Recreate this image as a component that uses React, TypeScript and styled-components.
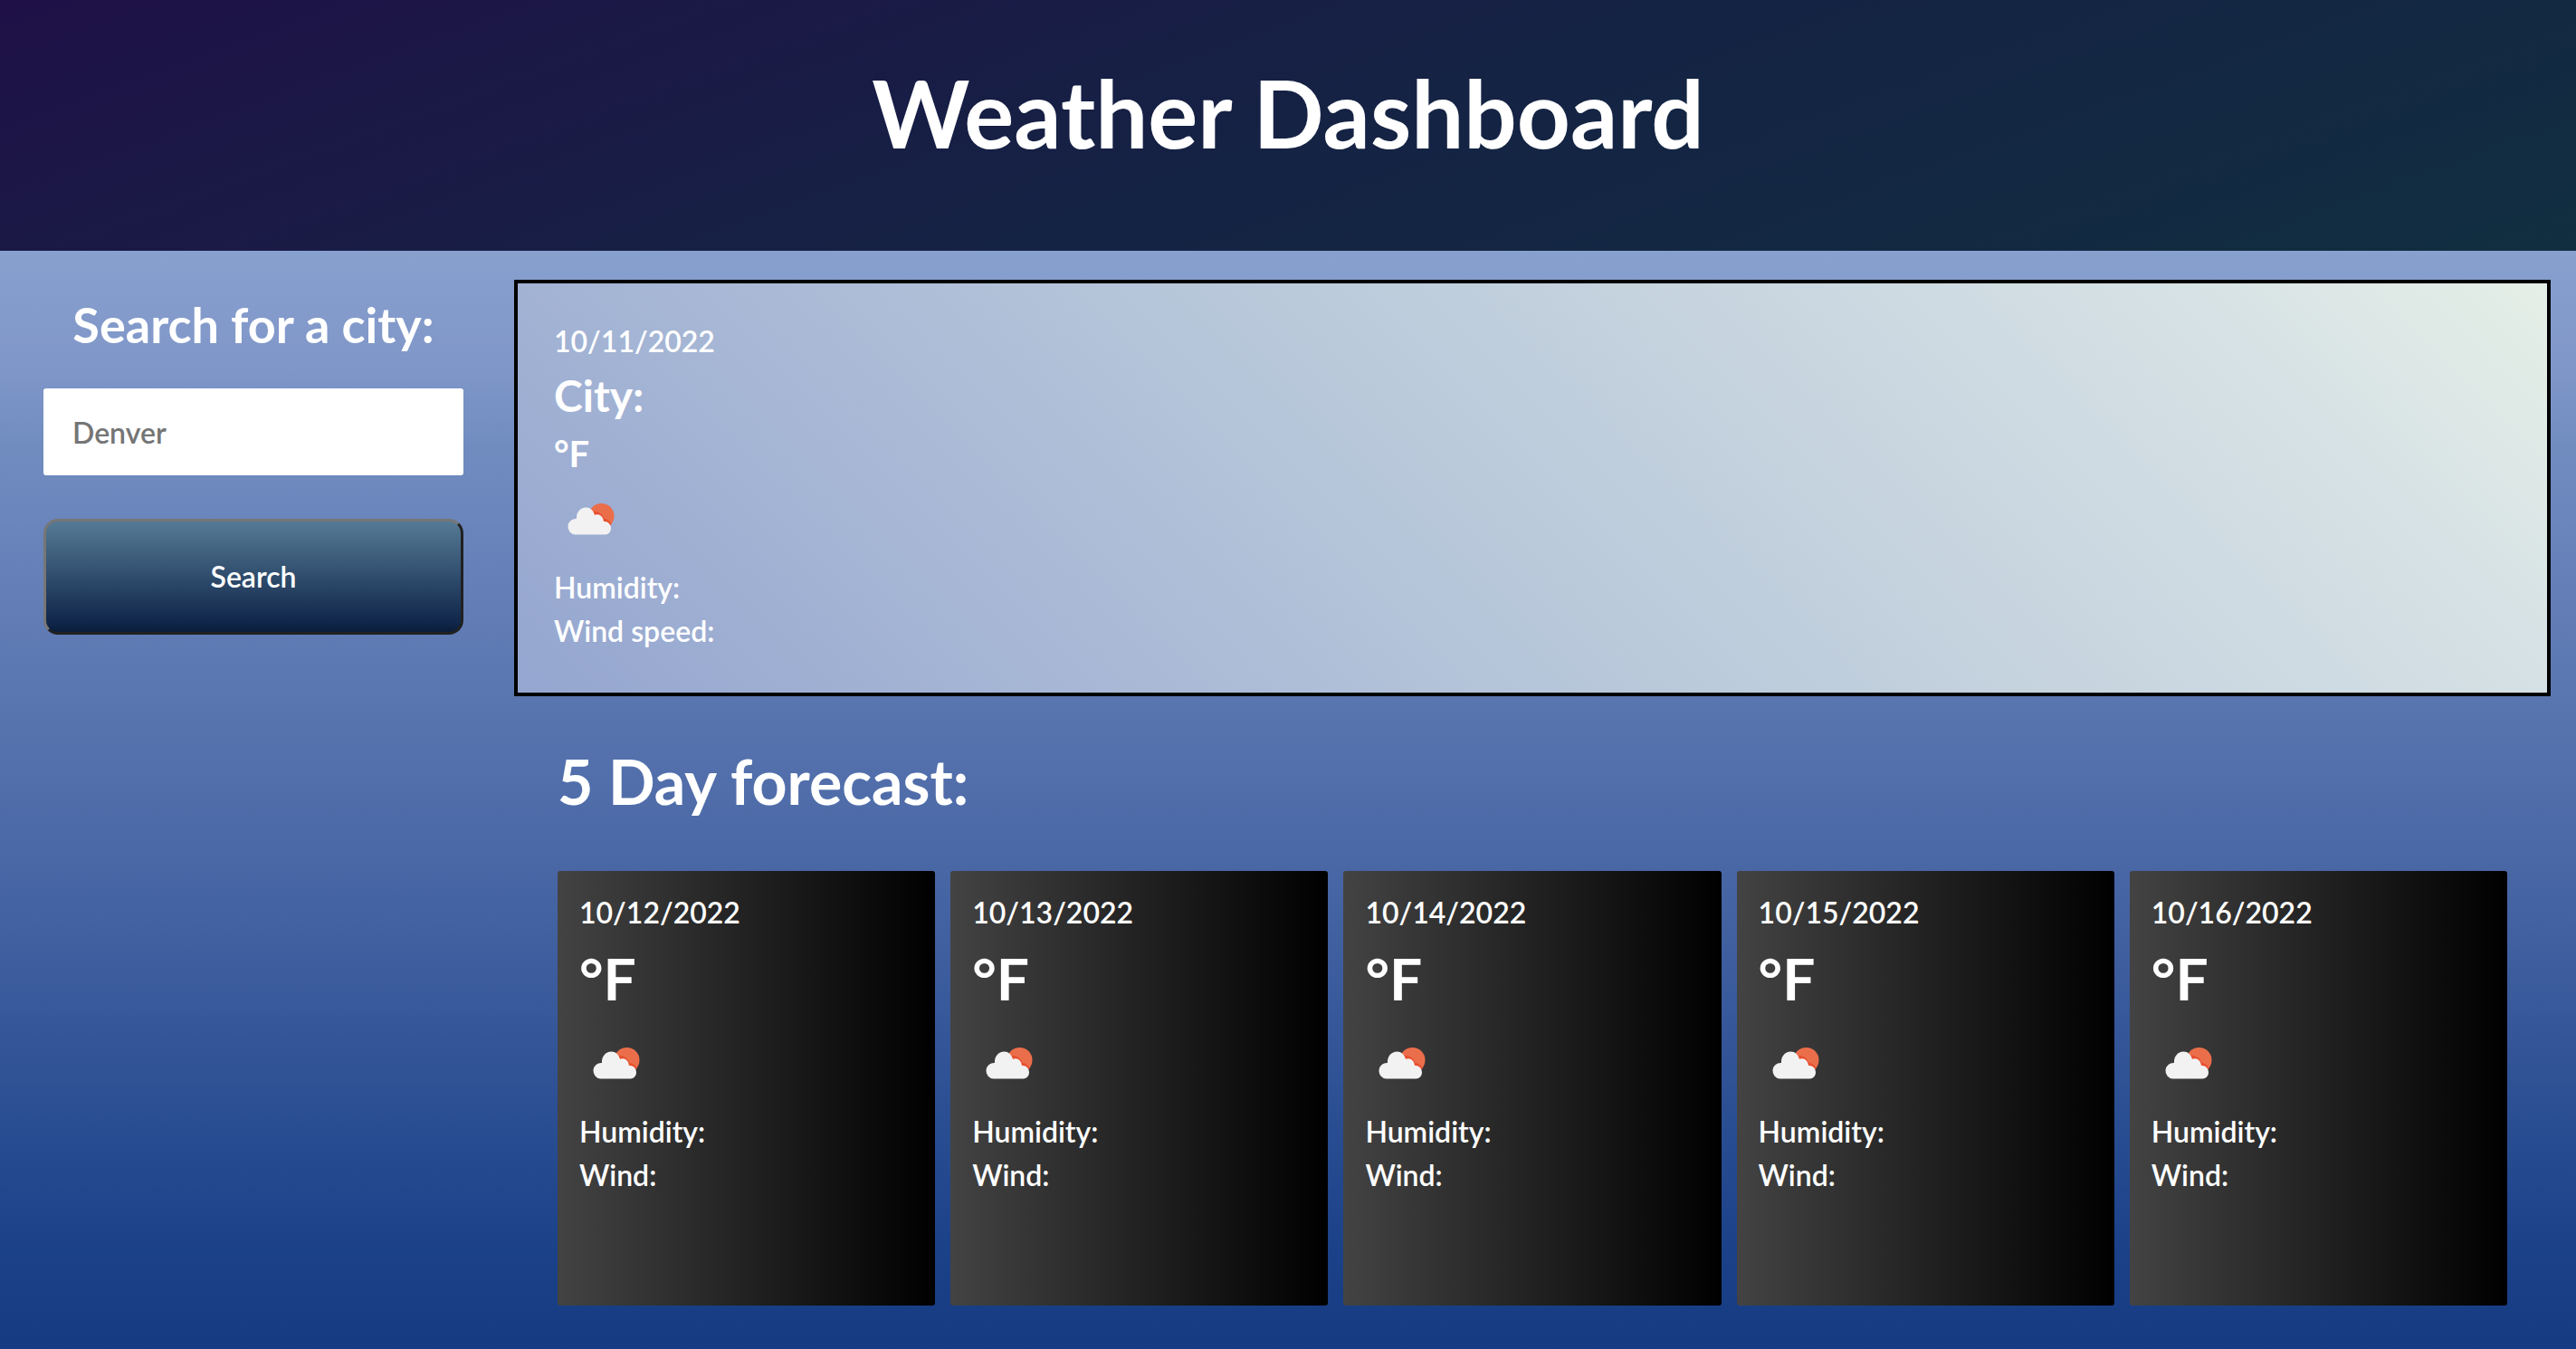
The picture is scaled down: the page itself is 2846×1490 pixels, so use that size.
import React from "react";
import styled, { createGlobalStyle } from "styled-components";

const GlobalStyle = createGlobalStyle`
  *, *::before, *::after { box-sizing: border-box; }
  body {
    margin: 0;
    background: #163b82;
    color: #fff;
    font-family: Lato, "Open Sans", sans-serif;
    font-size: 32px;
    font-weight: 600;
    line-height: 48px;
  }
  h1, h2, h3, p { margin: 0; }
`;

const Page = styled.div`
  display: flex;
  flex-direction: column;
  min-height: 100vh;
`;

const Header = styled.header`
  padding: 49px 24px 78px;
  text-align: center;
  background: linear-gradient(160deg, #1f1147, #152244 50%, #112e40);
`;

const Title = styled.h1`
  font-size: 103px;
  line-height: 150px;
  font-weight: 700;
`;

const Body = styled.div`
  flex: 1;
  display: flex;
  align-items: flex-start;
  padding-bottom: 48px;
  background: linear-gradient(#88a0ce, #7f96c8 11%, #708cbf 18%, #6782ba 28%, #4967a5 56%, #1b4189 91%, #163b82);
`;

const Sidebar = styled.aside`
  flex: 0 0 568px;
  padding: 46px 56px 0 48px;
`;

const SearchForm = styled.form`
  display: flex;
  flex-direction: column;
`;

const SearchLabel = styled.label`
  margin-bottom: 34px;
  font-size: 54px;
  line-height: 72px;
  font-weight: 700;
  text-align: center;
  white-space: nowrap;
`;

const SearchInput = styled.input`
  width: 100%;
  height: 96px;
  margin-bottom: 48px;
  padding: 0 32px;
  border: 0;
  border-radius: 3px;
  background: #fff;
  color: #222;
  font: inherit;

  &::placeholder { color: #757575; opacity: 1; }
`;

const SearchButton = styled.button`
  height: 128px;
  border: 3px solid;
  border-color: #767676 #212121 #212121 #767676;
  border-radius: 16px;
  background: linear-gradient(#557a95, #10264a 92%, #0b1e3a);
  color: #fff;
  font: inherit;
  cursor: pointer;
`;

const Content = styled.main`
  flex: 1;
  min-width: 0;
  padding: 32px 28px 0 0;
`;

const Current = styled.section`
  padding: 40px 40px 44px;
  border: 4px solid #000;
  background: linear-gradient(45deg, #95a6d0, #bccbdb 50%, #d6e1e5 84%, #e5efe7);
`;

const City = styled.h2`
  font-size: 48px;
  line-height: 72px;
  font-weight: 700;
`;

const Temperature = styled.p<{ $large?: boolean }>`
  font-size: ${(p) => (p.$large ? 64 : 40)}px;
  line-height: ${(p) => (p.$large ? 98 : 56)}px;
  font-weight: 700;
`;

const Icon = styled.svg`
  display: block;
  width: 80px;
  height: 96px;
`;

const Forecast = styled.section`
  padding: 46px 48px 0;
`;

const ForecastTitle = styled.h2`
  margin-bottom: 51px;
  font-size: 68px;
  line-height: 96px;
  font-weight: 700;
`;

const Days = styled.div`
  display: grid;
  grid-template-columns: repeat(5, minmax(0, 1fr));
  gap: 17px;
`;

const Day = styled.article`
  min-height: 480px;
  padding: 22px 24px;
  border-radius: 3px;
  background: linear-gradient(to right, #434343, #000);
`;

const dates = ["10/12/2022", "10/13/2022", "10/14/2022", "10/15/2022", "10/16/2022"];

function PartlyCloudy() {
  return (
    <Icon viewBox="0 0 80 96" role="img" aria-label="Partly cloudy">
      <circle cx="52.5" cy="41" r="14" fill="#eb6e4b" />
      <path
        d="M40 39 C44 36 52 37 54 45 C57 45 61 47 62 51"
        fill="none"
        stroke="#e8502f"
        strokeWidth="3"
      />
      <path
        d="M23.500 61.500 A8.700 8.700 0 0 1 25 44 C24.500 37 29 31.500 35.500 31.500 C40 31.500 43.500 34.500 45 40 C49.500 37.500 54.500 41 55 47 C59.500 46.500 63 50 63 54.500 C63 58.500 60 61.500 56.500 61.500 Z"
        fill="#f2f2f2"
      />
    </Icon>
  );
}

export default function App() {
  return (
    <>
      <GlobalStyle />
      <Page>
        <Header>
          <Title>Weather Dashboard</Title>
        </Header>
        <Body>
          <Sidebar>
            <SearchForm onSubmit={(e) => e.preventDefault()}>
              <SearchLabel htmlFor="city">Search for a city:</SearchLabel>
              <SearchInput id="city" type="text" placeholder="Denver" />
              <SearchButton type="submit">Search</SearchButton>
            </SearchForm>
          </Sidebar>
          <Content>
            <Current>
              <p>10/11/2022</p>
              <City>City:</City>
              <Temperature>°F</Temperature>
              <PartlyCloudy />
              <p>Humidity:</p>
              <p>Wind speed:</p>
            </Current>
            <Forecast>
              <ForecastTitle>5 Day forecast:</ForecastTitle>
              <Days>
                {dates.map((date) => (
                  <Day key={date}>
                    <p>{date}</p>
                    <Temperature $large>°F</Temperature>
                    <PartlyCloudy />
                    <p>Humidity:</p>
                    <p>Wind:</p>
                  </Day>
                ))}
              </Days>
            </Forecast>
          </Content>
        </Body>
      </Page>
    </>
  );
}
